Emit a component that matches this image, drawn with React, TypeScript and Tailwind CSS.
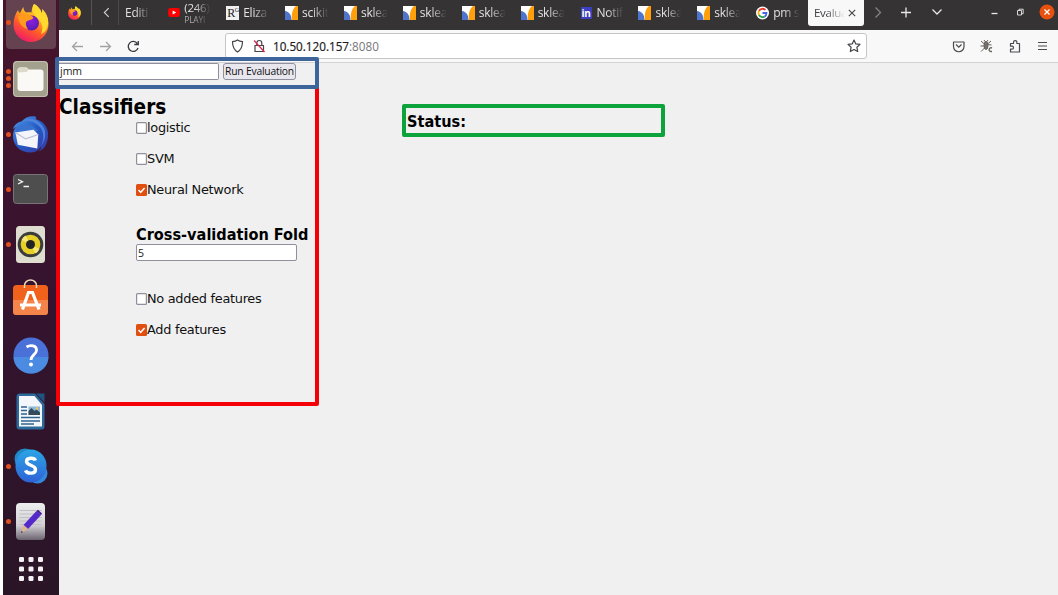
import type { ReactNode } from "react";

const FADE = "[mask-image:linear-gradient(to_right,black_35%,transparent_92%)]";

function FirefoxIcon({ className }: { className: string }) {
  return (
    <svg viewBox="0 0 36 38" className={className}>
      <defs>
        <linearGradient id="ffBody" x1="0.8" y1="0" x2="0.3" y2="1">
          <stop offset="0" stopColor="#fff04a" />
          <stop offset="0.35" stopColor="#ffb01e" />
          <stop offset="0.65" stopColor="#ff5a2a" />
          <stop offset="1" stopColor="#f0186a" />
        </linearGradient>
        <radialGradient id="ffCore" cx="0.5" cy="0.4" r="0.6">
          <stop offset="0" stopColor="#8a1fe0" />
          <stop offset="1" stopColor="#5b1bb0" />
        </radialGradient>
      </defs>
      <path
        d="M21 0c4 2 7 6 7.500 9 1-1 1-2.500 .5-4 4 3.500 6.500 8.500 6.500 15C35.500 30 28 38 18 38S.5 30 .5 20.500c0-6 2-10.500 4.500-14.500 .5 1.500 1 2.500 2 3 1-1 1.500-4 3.500-6 0 3 1 4.500 3 5.500 2-.5 3.500-.5 5 0 .5-3.500 .5-5.500 2.500-8.500z"
        fill="url(#ffBody)"
      />
      <path d="M21 0c4 2 7 6 7.500 9 1-1 1-2.500 .5-4 4 3.500 6.500 9 6 15-1 6-4 9-7 10 3-7 1-12-4-16-4-4-5-9-3-14z" fill="#ffd92e" />
      <circle cx="18.500" cy="19" r="7.500" fill="url(#ffCore)" />
      <path d="M5 13c3-3.500 8-4.500 13-1.500l2.500 2c-1 2.500-4.500 2.500-6.500 3.500-2 2-1 5 1 8-6-1-9-6-10-12z" fill="#ff9a1f" />
    </svg>
  );
}

function FilesIcon() {
  return (
    <svg viewBox="0 0 35 36" className="h-9 w-[35px]">
      <rect width="35" height="36" rx="4" fill="#c3c1ae" />
      <rect x="1" y="1" width="33" height="34" rx="3.500" fill="#a3a18d" />
      <path d="M4.500 9.500a3 3 0 0 1 3-3h6l2.500 2h11.500a3 3 0 0 1 3 3V27a3 3 0 0 1-3 3h-20a3 3 0 0 1-3-3z" fill="#faf9f5" />
      <path d="M4.500 11.500V9.500a3 3 0 0 1 3-3h6l2.500 2-2.500 2.500z" fill="#dddacb" />
    </svg>
  );
}

function MailIcon() {
  return (
    <svg viewBox="0 0 38 39" className="h-[39px] w-[38px]">
      <defs>
        <linearGradient id="tb" x1="0" y1="0" x2="1" y2="1">
          <stop offset="0" stopColor="#4f9be8" />
          <stop offset="0.5" stopColor="#2459c4" />
          <stop offset="1" stopColor="#3b38a4" />
        </linearGradient>
      </defs>
      <path d="M10 6c3-4 9-6 14-5 1 1 1 2 1 3 8 2 13 9 12 18-1 8-4 13-10 15 2-2 3-3 3-5-3 4-7 6-11 6C9 38 1 31 1 21c0-4 1-7 3-9-1 0-1 1-3 2 1-4 5-7 9-8z" fill="url(#tb)" />
      <path d="M10 6c7-2 14 0 19 6 4 5 4 12 1 19 6-8 5-17 0-22C25 3 17 2 10 6z" fill="#4f83dc" />
      <path d="M4 12c4-3 10-4 16-2l7 6-20 4c-3-2-4-5-3-8z" fill="#3973cf" />
      <path d="M3.500 17.500L22 14.500l5 5-1 14.500-20-4z" fill="#f4f5fa" />
      <path d="M3.500 17.500L14 24l13-4.500" fill="none" stroke="#b9bed3" strokeWidth="1.200" />
    </svg>
  );
}

function TerminalIcon() {
  return (
    <svg viewBox="0 0 35 30" className="h-[30px] w-[35px]">
      <rect x=".5" y=".5" width="34" height="29" rx="3" fill="#4e4e4e" stroke="#777377" />
      <path d="M5 5.500l4.500 2.200L5 10M10.500 12.500H16" fill="none" stroke="#f2f2f2" strokeWidth="1.300" />
    </svg>
  );
}

function SpeakerIcon() {
  return (
    <svg viewBox="0 0 29 37" className="h-[37px] w-[29px]">
      <rect width="29" height="37" rx="3.500" fill="#dfddd0" />
      <circle cx="14.500" cy="18.500" r="12.800" fill="#3b3d3c" />
      <circle cx="14.500" cy="18.500" r="9.800" fill="#e7cf27" />
      <path d="M14.500 18.500L5.500 14a10 10 0 0 1 4-4.500zM14.500 18.500l9 4.500a10 10 0 0 1-4 4.500z" fill="#f5e676" />
      <circle cx="14.500" cy="18.500" r="4.500" fill="#222423" />
    </svg>
  );
}

function SoftwareIcon() {
  return (
    <svg viewBox="0 0 35 36" className="mb-[7px] h-9 w-[35px]">
      <rect y="6" width="35" height="30" rx="3.500" fill="#f0611b" />
      <path d="M0 21h35v11.500a3.500 3.500 0 0 1-3.500 3.500h-28A3.500 3.500 0 0 1 0 32.500z" fill="#f4844a" />
      <path d="M11.500 9V6.500a6 5.500 0 0 1 12 0V9" fill="none" stroke="#f2d9b8" strokeWidth="1.500" />
      <path d="M9.500 30.500l6-17h4l6.500 17M7 26h21" fill="none" stroke="#fff" strokeWidth="3.200" />
    </svg>
  );
}

function HelpIcon() {
  return (
    <svg viewBox="0 0 36 37" className="h-[37px] w-9">
      <ellipse cx="18" cy="18.500" rx="17.500" ry="18" fill="#4a71d8" />
      <path d="M.5 20h35c0 9-8 16.500-17.500 16.500S.5 29 .5 20z" fill="#4b8be2" />
      <path d="M13.500 10c4-2.500 10.500-1.500 10 3.500-.3 4-5.500 4.500-5.500 9.500" fill="none" stroke="#fff" strokeWidth="2.800" />
      <circle cx="18" cy="27.500" r="2" fill="#fff" />
    </svg>
  );
}

function WriterIcon() {
  return (
    <svg viewBox="0 0 29 37" className="h-[37px] w-[29px]">
      <path d="M3 .5h16L28.500 11v22.500a3 3 0 0 1-3 3H3.500a3 3 0 0 1-3-3V3.500A3 3 0 0 1 3 .5z" fill="#2d6a9c" />
      <path d="M3 3h15.500L26 12v21.500H3z" fill="#f3f7fb" />
      <path d="M20 .5h8.500v9z" fill="#1f5583" />
      <path d="M5 14h6M5 17.500h6M5 21h6M5 24.500h19M5 28h19M5 31h13" stroke="#2e6390" strokeWidth="1.300" />
      <rect x="12.500" y="13.500" width="11.500" height="8.500" fill="#8bb7d8" />
      <path d="M12.500 22v-4l3-3 3 3 2-1.500 3.500 3V22z" fill="#34495b" />
      <circle cx="21" cy="15.500" r="1.200" fill="#f3c94d" />
    </svg>
  );
}

function SkypeIcon() {
  return (
    <svg viewBox="0 0 34 36" className="h-9 w-[34px]">
      <defs>
        <linearGradient id="sk" x1="0" y1="0" x2="0" y2="1">
          <stop offset="0" stopColor="#2ba6e6" />
          <stop offset="1" stopColor="#2f62d6" />
        </linearGradient>
      </defs>
      <circle cx="11" cy="11" r="10.500" fill="#2088c7" />
      <circle cx="23.500" cy="25.500" r="10" fill="#3388db" />
      <ellipse cx="17" cy="18" rx="15.500" ry="16.500" fill="url(#sk)" />
      <path d="M21.500 12.500c-1-3-9-3.500-9 1 0 4.500 9 3 9 8 0 5-8.500 4.500-10 .8" fill="none" stroke="#fff" strokeWidth="3.400" />
    </svg>
  );
}

function EditorIcon() {
  return (
    <svg viewBox="0 0 29 37" className="h-[37px] w-[29px]">
      <defs>
        <linearGradient id="ed" x1="0" y1="0" x2="0" y2="1">
          <stop offset="0" stopColor="#eeeeee" />
          <stop offset="0.6" stopColor="#d2d0d4" />
          <stop offset="1" stopColor="#6b6470" />
        </linearGradient>
      </defs>
      <rect width="29" height="37" rx="4" fill="url(#ed)" />
      <path d="M3.500 7.500h22M3.500 11h22M3.500 14.500h22M3.500 18h22M3.500 21.500h22" stroke="#c1bfc3" />
      <path d="M7.500 22L20.500 8l4.500 4-13 14z" fill="#5429c9" />
      <path d="M20.500 8l1.500-1.200 4 3.800-1 1.400z" fill="#3f168f" />
      <path d="M7.500 22l4.500 4-7 4z" fill="#e0b58c" />
      <path d="M5.500 28l1.700 1-2.200 1z" fill="#333" />
    </svg>
  );
}

function AppGridIcon() {
  const steps = [0, 9.5, 19];
  return (
    <svg viewBox="0 0 24 25" className="h-[25px] w-6">
      {steps.map((y) => steps.map((x) => <rect key={`${x}-${y}`} x={x} y={y} width="5" height="5" rx="1.300" fill="#f5f2f5" />))}
    </svg>
  );
}

function DockItem({ dots = 0, children }: { dots?: number; children: ReactNode }) {
  return (
    <div className="flex h-[55.4px] shrink-0 items-center">
      <div className="flex w-[10px] shrink-0 flex-col items-center gap-[2px] pl-px">
        {Array.from({ length: dots }, (_, i) => (
          <span key={i} className="size-[5px] rounded-full bg-[#e0501f]" />
        ))}
      </div>
      <div className="-ml-px flex w-[37px] justify-center">{children}</div>
    </div>
  );
}

function Dock() {
  return (
    <nav className="flex h-full w-14 shrink-0 flex-col bg-linear-to-b from-[#47142c] via-[#35132f] to-[#2a1527]">
      <div className="mb-px flex h-[50px] shrink-0">
        <div className="ml-[3px] flex h-[49px] w-[50px] items-center rounded-b bg-[#644250] pb-1">
          <span className="size-[5px] shrink-0 rounded-full bg-[#e0501f]" />
          <FirefoxIcon className="ml-[2px] h-[38px] w-9" />
        </div>
      </div>
      <DockItem dots={3}><FilesIcon /></DockItem>
      <DockItem dots={1}><MailIcon /></DockItem>
      <DockItem dots={1}><TerminalIcon /></DockItem>
      <DockItem dots={1}><SpeakerIcon /></DockItem>
      <DockItem><SoftwareIcon /></DockItem>
      <DockItem><HelpIcon /></DockItem>
      <DockItem><WriterIcon /></DockItem>
      <DockItem dots={1}><SkypeIcon /></DockItem>
      <DockItem dots={1}><EditorIcon /></DockItem>
      <div className="flex justify-center pt-[7.500px]"><AppGridIcon /></div>
    </nav>
  );
}

function SklearnIcon() {
  return (
    <svg viewBox="0 0 13 14" className="h-[14px] w-[13px]">
      <rect width="13" height="14" fill="#fff" />
      <path d="M0 5c4 .5 6.500 4 6.500 9H0z" fill="#4f74cb" />
      <path d="M13 0v14H7C6 8 8 2 11 0z" fill="#ff9f0a" />
    </svg>
  );
}

function YoutubeIcon() {
  return (
    <svg viewBox="0 0 13 10" className="h-[9px] w-3">
      <rect width="13" height="10" rx="2.500" fill="#f00" />
      <path d="M5 2.700l4 2.300-4 2.300z" fill="#fff" />
    </svg>
  );
}

function ResearchIcon() {
  return (
    <span className="flex h-[14px] w-[13px] bg-[#f1f1f1] pl-px font-['Liberation_Serif',serif] text-[12px] leading-[15px] tracking-[-0.5px] text-[#222]">
      R<span className="text-[6px] leading-[8px]">G</span>
    </span>
  );
}

function LinkedInIcon() {
  return (
    <span className="flex h-3 w-[11px] items-center justify-center bg-[#3b3fc0] font-['Open_Sans',sans-serif] text-[10px] leading-none font-bold text-white">
      in
    </span>
  );
}

function GoogleIcon() {
  return (
    <svg viewBox="0 0 13 14" className="h-[14px] w-[13px]">
      <circle cx="6.500" cy="7" r="6.500" fill="#fff" />
      <g fill="none" strokeWidth="1.800">
        <path d="M3 5a4 4 0 0 1 6.500-1" stroke="#ea3a2e" />
        <path d="M3.100 9.200A4.200 4.200 0 0 1 3 4.800" stroke="#f2b811" />
        <path d="M8.500 10.600A4 4 0 0 1 3 9" stroke="#2fa64f" />
        <path d="M6.500 7h4c0 1.500-.7 3-2 3.700" stroke="#4568e0" />
      </g>
    </svg>
  );
}

const tabs: { icon: ReactNode; title: string; note?: string }[] = [
  { icon: <YoutubeIcon />, title: "(246)", note: "PLAYI" },
  { icon: <ResearchIcon />, title: "Eliza" },
  { icon: <SklearnIcon />, title: "scikit" },
  { icon: <SklearnIcon />, title: "sklea" },
  { icon: <SklearnIcon />, title: "sklea" },
  { icon: <SklearnIcon />, title: "sklea" },
  { icon: <SklearnIcon />, title: "sklea" },
  { icon: <LinkedInIcon />, title: "Notif" },
  { icon: <SklearnIcon />, title: "sklea" },
  { icon: <SklearnIcon />, title: "sklea" },
  { icon: <GoogleIcon />, title: "pm s" },
];

function TabBar() {
  return (
    <header className="flex h-[30px] shrink-0 items-start overflow-hidden bg-[#353333] text-[12px] tracking-[-0.25px] text-[#e4e3e3]">
      <div className="flex h-[25px] w-[33px] items-center border-r border-[#555353] pl-[9px]">
        <FirefoxIcon className="h-[14px] w-[13px]" />
      </div>
      <div className="flex h-[25px] w-[27px] items-center justify-center border-r border-[#4d4b4b]">
        <svg viewBox="0 0 8 12" className="ml-0.5 h-[11px] w-[7px]" fill="none" stroke="#d5d3d3" strokeWidth="1.300">
          <path d="M6.500 1L1.500 6l5 5" />
        </svg>
      </div>
      <div className="flex h-[25px] w-[39.800px] items-center pl-1.5">
        <span className={`w-7 whitespace-nowrap ${FADE}`}>Editi</span>
      </div>
      {tabs.map((tab, i) => (
        <div key={i} className="flex h-[25px] w-[58.900px] shrink-0 items-center gap-[4px] pl-[8.500px]">
          <div className="flex w-[13px] shrink-0 justify-center">{tab.icon}</div>
          <div className={`w-[29px] whitespace-nowrap ${FADE}`}>
            <div className={tab.note ? "text-[11.500px] leading-[14px]" : "leading-5"}>{tab.title}</div>
            {tab.note && <div className="-mt-px text-[8.500px] leading-[11px] text-[#aaa]">{tab.note}</div>}
          </div>
        </div>
      ))}
      <div className="ml-[1.300px] flex h-[26px] w-14 shrink-0 items-center rounded-b-[3px] bg-[#f8f8f8] pl-[6px] text-[#3c3c40]">
        <span className={`w-[34px] whitespace-nowrap text-[11.500px] ${FADE}`}>Evalua</span>
        <svg viewBox="0 0 8 8" className="size-2" stroke="#444" strokeWidth="1.100"><path d="M.8 .8l6.400 6.400M7.200 .8L.8 7.200" /></svg>
      </div>
      <div className="flex h-[25px] flex-1 items-center">
        <svg viewBox="0 0 194 25" className="h-[25px] w-[194px]" fill="none" stroke="#e8e8e8" strokeWidth="1.300">
          <path d="M11.500 7.500l5 5-5 5" stroke="#858383" />
          <path d="M37 12.500h10M42 7.500v10" />
          <path d="M68.500 9.500l4.500 4.500 4.500-4.500" />
          <path d="M127.500 13.500h6" />
          <path d="M153.500 10.500h4v4.500h-4zM155 10.500V9.200h4.200v4.500h-1.700" strokeWidth="0.900" />
          <circle cx="183" cy="12" r="7.500" fill="#e8500f" stroke="none" />
          <path d="M180.500 9.500l5 5M185.500 9.500l-5 5" stroke="#fff" />
        </svg>
      </div>
    </header>
  );
}

function AddressBar() {
  return (
    <div className="flex h-[33px] shrink-0 items-center border-b border-[#d3d3d5] bg-[#f8f8f8]">
      <svg viewBox="0 0 166 32" className="h-8 w-[166px] shrink-0" fill="none" strokeWidth="1.300">
        <path d="M24 16.500H13.500M18 12l-4.500 4.500L18 21M41 16.500h10.500M47 12l4.500 4.500L47 21" stroke="#a3a3a5" />
        <path d="M78.300 13.500A5 5 0 1 0 79 18M79.300 11v3.500h-4" stroke="#39393d" />
      </svg>
      <div className="flex h-[26px] w-[642px] shrink-0 items-center rounded-[3px] border border-[#c6c6c8] bg-white">
        <svg viewBox="0 0 47 24" className="h-6 w-[47px] shrink-0" fill="none" stroke="#45454a" strokeWidth="1.200">
          <path d="M11.500 6c1.500 1.200 3 1.600 5 1.600 0 5-1.500 8.400-5 10.400-3.500-2-5-5.400-5-10.400 2 0 3.500-.4 5-1.600z" />
          <path d="M29 11.500h8.500v6H29zM30.800 11.500V9a2.500 2.500 0 0 1 5 0v2.500" />
          <path d="M28 6.500l10.500 11.500" stroke="#e0244f" />
        </svg>
        <span className="flex-1 pt-px font-['Open_Sans',sans-serif] text-[11.700px] whitespace-nowrap text-[#77777b]">
          <span className="text-[#1b1b20] [-webkit-text-stroke:0.2px]">10.50.120.157</span>:8080
        </span>
        <svg viewBox="0 0 14 14" className="mr-[5px] size-[14px]" fill="none" stroke="#444448" strokeWidth="1.200" strokeLinejoin="round">
          <path d="M7 1l1.800 3.900 4.200 .5-3.100 2.900 .8 4.200L7 10.500l-3.700 2 .8-4.200L1 5.400l4.200-.5z" />
        </svg>
      </div>
      <svg viewBox="0 0 191 32" className="h-8 w-[191px] shrink-0" fill="none" stroke="#4b4b4f" strokeWidth="1.200">
        <path d="M86.500 12h10.500v4.500a5.200 5.200 0 0 1-10.500 0z" strokeLinejoin="round" />
        <path d="M89 14.500l2.800 2.700 2.700-2.700" />
        <g stroke="#66635d" strokeWidth="1">
          <ellipse cx="119" cy="15.500" rx="2" ry="4" fill="#77736b" />
          <path d="M114 11l4 3.500M124 11l-4 3.500M113.500 16h5M114 21.500l4-4M117 10l1.500 2M121 10l-1.500 2M120 14.500l4.500 .5" />
          <path d="M125 18c-3-1.500-4.500 4 0 3.500" strokeWidth="1.400" />
        </g>
        <path d="M143.500 13.500h3v-1.200a1.700 1.700 0 0 1 3.400 0v1.200h2.600v8.500h-9v-2.800h1.500a1.500 1.500 0 0 0 0-3h-1.500z" strokeLinejoin="round" />
        <path d="M171 12.500h9M171 16h9M171 19.500h9" />
      </svg>
    </div>
  );
}

function Check({ label, checked = false }: { label: string; checked?: boolean }) {
  return (
    <label className="flex h-[31px] items-center text-[12.900px] tracking-[-0.29px] text-[#111]">
      <svg viewBox="0 0 11 12" className="mt-px h-3 w-[11px] shrink-0">
        {checked ? (
          <>
            <rect width="11" height="12" rx="1.500" fill="#e04e10" />
            <path d="M2.500 6l2.200 2.300L8.600 4" fill="none" stroke="#fff" strokeWidth="1.500" />
          </>
        ) : (
          <rect x=".6" y=".6" width="9.800" height="10.800" rx="1" fill="#fff" stroke="#8f8f9d" strokeWidth="1.200" />
        )}
      </svg>
      <span>{label}</span>
    </label>
  );
}

function Page() {
  return (
    <main className="relative flex flex-1 bg-[#f0f0f0] font-['DejaVu_Sans',sans-serif]">
      <div className="w-[343px] shrink-0">
        <div className="flex h-[17px] items-center font-['Open_Sans',sans-serif]">
          <div className="h-[17px] w-40 rounded-r-[2px] border border-l-0 border-[#8f8f9d] bg-white pl-px text-[10.500px] leading-[15px] text-[#222]">jmm</div>
          <button className="ml-1 flex h-[17px] w-[73px] items-center justify-center rounded-[3px] border border-[#8f8f9d] bg-[#e9e7ee] text-[10.300px] leading-[15px] tracking-[-0.2px] whitespace-nowrap text-[#111]">Run Evaluation</button>
        </div>
        <h1 className="mt-[15px] font-['DejaVu_Sans_Condensed','DejaVu_Sans',sans-serif] text-[20.600px] leading-6 font-bold text-black [font-stretch:condensed]">Classifiers</h1>
        <div className="-mt-[7px] pl-[77px]">
          <Check label="logistic" />
          <Check label="SVM" />
          <Check label="Neural Network" checked />
          <h2 className="mt-[21px] font-['DejaVu_Sans_Condensed','DejaVu_Sans',sans-serif] text-[16.150px] leading-[18px] font-bold whitespace-nowrap text-black [font-stretch:condensed]">Cross-validation Fold</h2>
          <div className="h-[17px] w-[161px] rounded-[2px] border border-[#8f8f9d] bg-white pl-px font-['Open_Sans',sans-serif] text-[10.500px] leading-[16px] text-[#222]">5</div>
          <div className="mt-[22px]">
            <Check label="No added features" />
            <Check label="Add features" checked />
          </div>
        </div>
      </div>
      <section className="mt-[41px] h-[33px] w-[263px] rounded-[2px] border-4 border-[#0da33c] pl-px">
        <h2 className="font-['DejaVu_Sans_Condensed','DejaVu_Sans',sans-serif] text-[16.150px] leading-[27px] font-bold text-black [font-stretch:condensed]">Status:</h2>
      </section>
      <div className="pointer-events-none absolute top-[22px] -left-[3px] h-[321px] w-[263px] rounded-[2px] border-4 border-[#f60008]" />
      <div className="pointer-events-none absolute -top-[6px] -left-[4px] h-8 w-[264px] rounded-[2px] border-4 border-[#3d659c]" />
    </main>
  );
}

export default function App() {
  return (
    <div className="flex h-[595px] w-[1058px] overflow-hidden bg-white pl-[3px] font-['Open_Sans',sans-serif]">
      <Dock />
      <div className="flex min-w-0 flex-1 flex-col">
        <TabBar />
        <AddressBar />
        <Page />
      </div>
    </div>
  );
}
